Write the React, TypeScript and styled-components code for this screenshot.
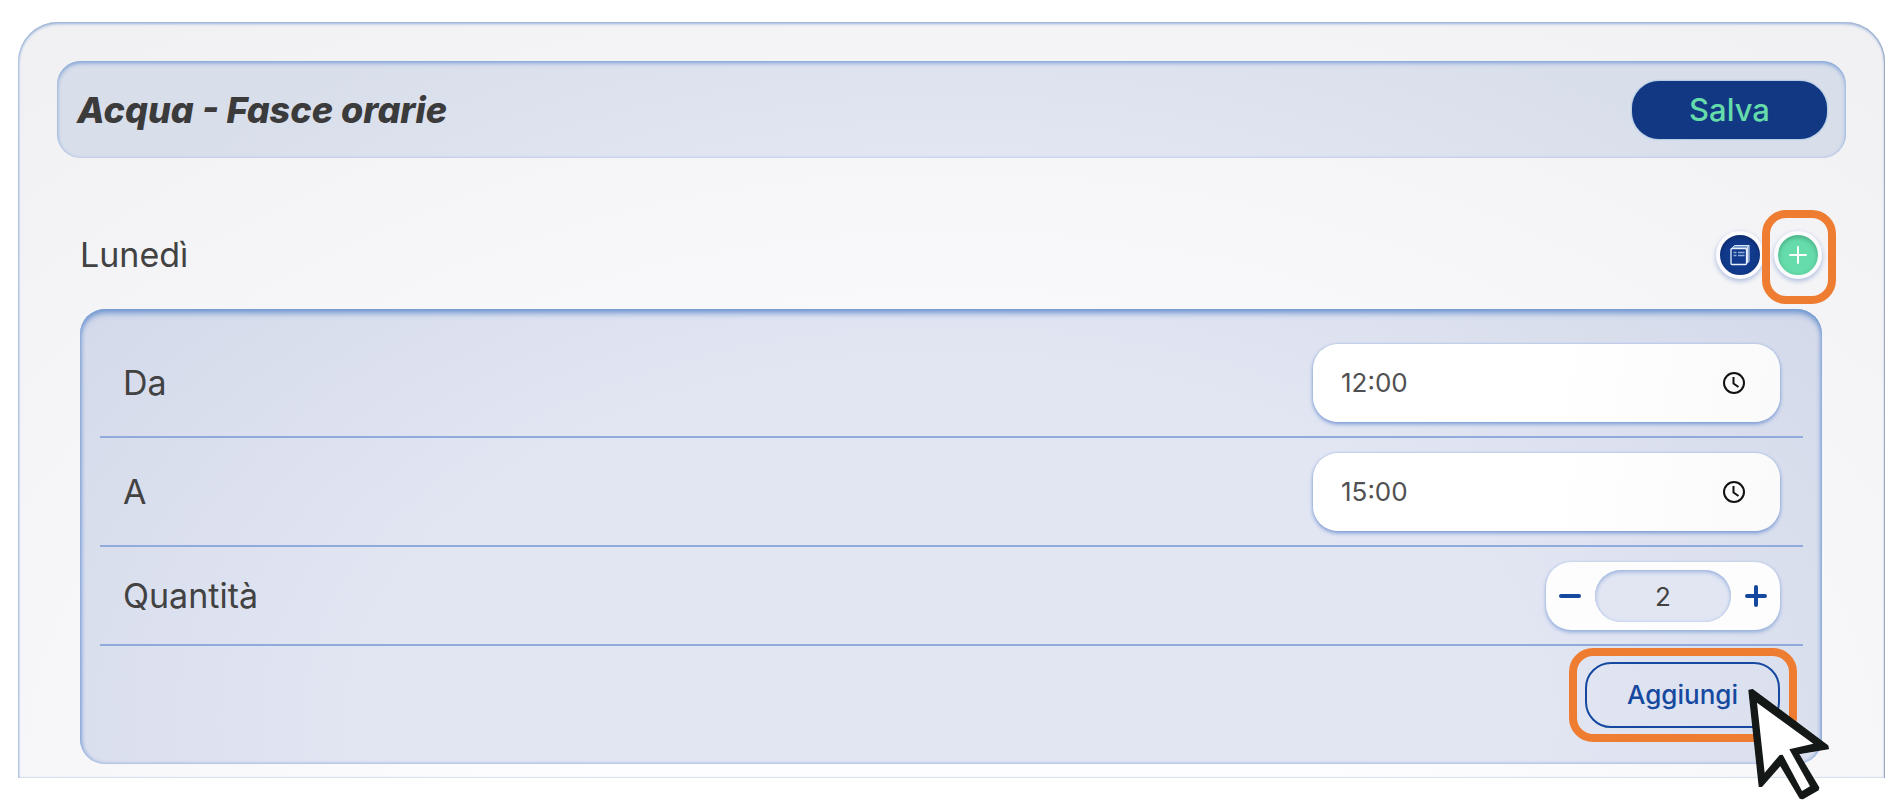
import React, { useState } from "react";
import styled, { createGlobalStyle } from "styled-components";

const GlobalStyle = createGlobalStyle`
  *, *::before, *::after { box-sizing: border-box; }
  body {
    margin: 0;
    background: #fff;
    color: #424243;
    font-family: Inter, "Liberation Sans", sans-serif;
  }
  button, input { font: inherit; color: inherit; margin: 0; }
  button { cursor: pointer; }
`;

const Page = styled.main`
  padding: 22px 11px 30px 18px;
`;

const Card = styled.section`
  padding: 39px 39px 14px;
  border-radius: 40px 40px 0 0;
  background: radial-gradient(ellipse 62% 100% at 50% 100%, #fdfdff 30%, #f0f0f3 130%);
  box-shadow:
    inset 0 2px 3px #9db4d8,
    inset 1px 0 2px #a9bfe2,
    inset -1px 0 1px #8f9bb3;
`;

const Header = styled.header`
  display: flex;
  align-items: center;
  justify-content: space-between;
  height: 97px;
  padding: 0 19px 0 20px;
  border-radius: 24px;
  background: radial-gradient(ellipse 50% 400% at 50% 300%, #e2e6f3 50%, #d8deea 100%);
  box-shadow: inset 0 2px 4px #7c9fd6, inset 0 0 2px #b4c6e6;
`;

const Title = styled.h1`
  margin: 0;
  font-size: 36px;
  line-height: 40px;
  font-weight: 800;
  font-style: italic;
  color: #3b3b3c;
`;

const SaveButton = styled.button`
  width: 195px;
  height: 58px;
  padding: 0;
  border: 0;
  border-radius: 27px;
  background: #123883;
  box-shadow: 0 0 2px #5f9bd0;
  color: #66dcab;
  font-size: 31px;
  line-height: 40px;
  font-weight: 500;
`;

const Day = styled.section`
  padding: 73px 24px 0 23px;
`;

const DayHeader = styled.div`
  display: flex;
  align-items: center;
  justify-content: space-between;
  height: 48px;
  margin-bottom: 30px;
`;

const DayName = styled.h2`
  margin: 0;
  font-size: 34px;
  line-height: 40px;
  font-weight: 400;
`;

const Actions = styled.div`
  display: flex;
  gap: 10px;
`;

const RoundButton = styled.button<{ $tone: "navy" | "mint" }>`
  display: flex;
  align-items: center;
  justify-content: center;
  width: 48px;
  height: 48px;
  padding: 0;
  border: 4px solid #fbfbfd;
  border-radius: 50%;
  background: ${(p) => (p.$tone === "navy" ? "#123a8c" : "#66dcab")};
  box-shadow:
    0 2px 5px #a9b8dd,
    inset 0 2px 5px ${(p) => (p.$tone === "navy" ? "#0d2a66" : "#48a882")};
`;

const Highlighted = styled.div`
  position: relative;
  display: flex;
`;

const Ring = styled.span<{ $inset: string }>`
  position: absolute;
  inset: ${(p) => p.$inset};
  border: 8px solid #ef7d31;
  border-radius: 24px;
  pointer-events: none;
`;

const Panel = styled.form`
  padding: 20px 19px 0 20px;
  border-radius: 25px;
  background: radial-gradient(ellipse 56% 130% at 50% 90%, #e2e6f3 60%, #d3d9e9 115%);
  box-shadow:
    inset 0 5px 6px -1px #6f96d0,
    inset 2px 0 4px -1px #86a6da,
    inset -2px 0 4px -1px #86a6da;
`;

const Row = styled.div`
  display: flex;
  align-items: center;
  justify-content: space-between;
  padding: 15px 23px 14px 23px;
  border-bottom: 2px solid #8faadb;
`;

const FooterRow = styled.div`
  display: flex;
  justify-content: flex-end;
  padding: 16px 23px 36px;
`;

const Label = styled.label`
  font-size: 34px;
  line-height: 40px;
`;

const TimeBox = styled.div`
  display: flex;
  align-items: center;
  width: 467px;
  height: 78px;
  padding: 0 34px 0 28px;
  border-radius: 25px;
  background: linear-gradient(100deg, #fff 50%, #fafafb);
  box-shadow: 0 2px 4px #7596d2, 0 0 2px #a9bfe6;
`;

const TimeInput = styled.input`
  flex: 1;
  min-width: 0;
  padding: 0;
  border: 0;
  outline: 0;
  background: none;
  font-size: 26px;
  line-height: 32px;
  color: #505052;
`;

const IconButton = styled.button`
  display: flex;
  padding: 0;
  border: 0;
  background: none;
`;

const Stepper = styled.div`
  display: flex;
  align-items: center;
  justify-content: space-between;
  width: 234px;
  height: 68px;
  padding: 0 12px;
  border-radius: 25px;
  background: #fdfdfe;
  box-shadow: 0 2px 4px #8ca8d9, 0 0 2px #b9cbea;
`;

const Quantity = styled.input`
  width: 136px;
  height: 52px;
  padding: 0;
  border: 0;
  outline: 0;
  border-radius: 26px;
  background: #e2e6f3;
  box-shadow: inset 0 2px 4px #9bb3de, inset 0 0 2px #b4c6e6;
  text-align: center;
  font-size: 26px;
  line-height: 32px;
`;

const AddButton = styled.button`
  width: 195px;
  height: 66px;
  padding: 0;
  border: 2px solid #1549a0;
  border-radius: 26px;
  background: transparent;
  color: #1549a0;
  font-size: 26px;
  line-height: 32px;
  font-weight: 500;
`;

const Pointer = styled.svg`
  position: absolute;
  left: 162px;
  top: 26px;
  width: 84px;
  height: 113px;
  pointer-events: none;
`;

const PagesIcon = () => (
  <svg width="22" height="22" viewBox="0 0 22 22" fill="none" strokeLinejoin="round">
    <path d="M4 3L6 1.500H19.500V17L17 19V4.500H3Z" fill="#6f95cb" />
    <path
      d="M2 5.500L5.500 1.500H20V17.500L17 20M17.500 4.500L20 1.500M18.500 3V18.500"
      stroke="#dbe8f7"
      strokeWidth="1"
    />
    <rect x="2" y="4.500" width="15.500" height="16" rx="1" fill="#123a8c" stroke="#e8f1fb" strokeWidth="1.300" />
    <path d="M4.500 8.500H7.500M9 8.500H15.500M4.500 11.500H7.500M9 11.500H15.500" stroke="#8fb0dc" strokeWidth="1.500" />
  </svg>
);

const PlusIcon = () => (
  <svg width="20" height="20" viewBox="0 0 20 20" stroke="#fff" strokeWidth="2" strokeLinecap="round">
    <path d="M10 2V18M2 10H18" />
  </svg>
);

const ClockIcon = () => (
  <svg width="24" height="24" viewBox="0 0 24 24" fill="none" stroke="#111" strokeWidth="2">
    <circle cx="12" cy="12" r="10" />
    <path d="M11.500 6V12.500L16.500 16" />
  </svg>
);

const StepIcon = ({ plus }: { plus?: boolean }) => (
  <svg width="24" height="24" viewBox="0 0 24 24" stroke="#1549a0" strokeWidth="4" strokeLinecap="round">
    <path d={plus ? "M12 3V21M3 12H21" : "M3 12H21"} />
  </svg>
);

function TimeField({ id, label, initial }: { id: string; label: string; initial: string }) {
  const [value, setValue] = useState(initial);
  return (
    <Row>
      <Label htmlFor={id}>{label}</Label>
      <TimeBox>
        <TimeInput id={id} inputMode="numeric" value={value} onChange={(e) => setValue(e.target.value)} />
        <IconButton type="button" aria-label={`Scegli orario: ${label}`}>
          <ClockIcon />
        </IconButton>
      </TimeBox>
    </Row>
  );
}

export default function App() {
  const [quantity, setQuantity] = useState(2);
  return (
    <Page>
      <GlobalStyle />
      <Card>
        <Header>
          <Title>Acqua - Fasce orarie</Title>
          <SaveButton type="button">Salva</SaveButton>
        </Header>
        <Day>
          <DayHeader>
            <DayName>Lunedì</DayName>
            <Actions>
              <RoundButton type="button" $tone="navy" aria-label="Copia">
                <PagesIcon />
              </RoundButton>
              <Highlighted>
                <RoundButton type="button" $tone="mint" aria-label="Nuova fascia">
                  <PlusIcon />
                </RoundButton>
                <Ring $inset="-21px -14px -25px -12px" />
              </Highlighted>
            </Actions>
          </DayHeader>
          <Panel onSubmit={(e) => e.preventDefault()}>
            <TimeField id="da" label="Da" initial="12:00" />
            <TimeField id="a" label="A" initial="15:00" />
            <Row>
              <Label htmlFor="quantita">Quantità</Label>
              <Stepper>
                <IconButton type="button" aria-label="Diminuisci" onClick={() => setQuantity(Math.max(0, quantity - 1))}>
                  <StepIcon />
                </IconButton>
                <Quantity
                  id="quantita"
                  inputMode="numeric"
                  value={quantity}
                  onChange={(e) => setQuantity(Number(e.target.value) || 0)}
                />
                <IconButton type="button" aria-label="Aumenta" onClick={() => setQuantity(quantity + 1)}>
                  <StepIcon plus />
                </IconButton>
              </Stepper>
            </Row>
            <FooterRow>
              <Highlighted>
                <AddButton type="submit">Aggiungi</AddButton>
                <Ring $inset="-14px -17px -14px -16px" />
                <Pointer viewBox="740 443 252 339" aria-hidden="true">
                  <path
                    fill="#141817"
                    stroke="#141817"
                    strokeWidth="4"
                    strokeLinejoin="round"
                    d="M746 450L757 448L982 616L984 625L894 640L955 742L953 749L907 775L899 773L840 674L784 738L777 738Z"
                  />
                  <path fill="#fff" d="M770 487L939 610L867 627L929 738L905 752L847 643L838 644L793 697Z" />
                </Pointer>
              </Highlighted>
            </FooterRow>
          </Panel>
        </Day>
      </Card>
    </Page>
  );
}
